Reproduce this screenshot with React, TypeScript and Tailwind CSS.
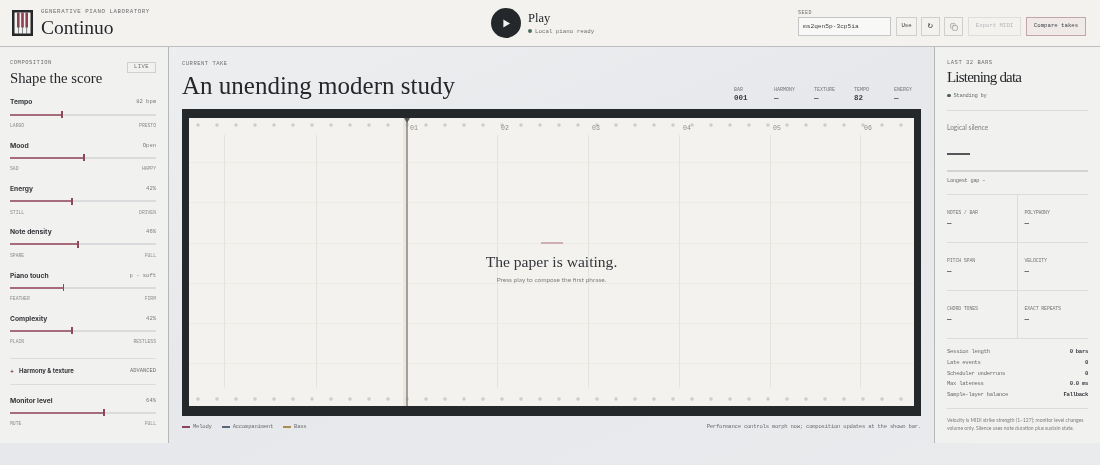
import { Copy } from 'lucide-react';
import React from 'react';

const serif = "font-['Liberation_Serif',serif]";
const mono = "font-['Liberation_Mono',monospace]";
const sans = "font-['Inter',sans-serif]";
const soft = "font-['Lato',sans-serif]";

const sliders = [
  { label: 'Tempo', value: '82 bpm', pct: 35, min: 'LARGO', max: 'PRESTO' },
  { label: 'Mood', value: 'Open', pct: 50, min: 'SAD', max: 'HAPPY' },
  { label: 'Energy', value: '42%', pct: 42, min: 'STILL', max: 'DRIVEN' },
  { label: 'Note density', value: '46%', pct: 46, min: 'SPARE', max: 'FULL' },
  { label: 'Piano touch', value: 'p · soft', pct: 36, min: 'FEATHER', max: 'FIRM' },
  { label: 'Complexity', value: '42%', pct: 42, min: 'PLAIN', max: 'RESTLESS' },
];

const metrics = [
  ['NOTES / BAR', 'POLYPHONY'],
  ['PITCH SPAN', 'VELOCITY'],
  ['CHORD TONES', 'EXACT REPEATS'],
];

const session = [
  ['Session length', '0 bars'],
  ['Late events', '0'],
  ['Scheduler underruns', '0'],
  ['Max lateness', '0.0 ms'],
  ['Sample-layer balance', 'Fallback'],
];

const stats = [
  ['BAR', '001'],
  ['HARMONY', '—'],
  ['TEXTURE', '—'],
  ['TEMPO', '82'],
  ['ENERGY', '—'],
];

const legend = [
  ['Melody', 'bg-[#8f4358]'],
  ['Accompaniment', 'bg-[#56657a]'],
  ['Bass', 'bg-[#a98d52]'],
];

function Slider({ label, value, pct, min, max }: (typeof sliders)[number]) {
  return (
    <div className="h-[43.3px]">
      <div className="flex h-[13px] items-center justify-between pt-[2px]">
        <span className={`${sans} text-[6.7px] font-bold text-[#33363a]`}>{label}</span>
        <span className={`${mono} text-[5.5px] text-[#77797b]`}>{value}</span>
      </div>
      <div className="relative mt-[5px] h-[3px]">
        <div className="absolute inset-x-0 top-[0.5px] h-[2px] bg-[#dadbdc]" />
        <div className="absolute left-0 top-[0.5px] h-[2px] bg-[#a66c7b]" style={{ width: `${pct}%` }} />
        <div className="absolute top-[-2px] h-[7px] w-[1.5px] bg-[#8a4a5c]" style={{ left: `${pct}%` }} />
      </div>
      <div className={`${mono} mt-[7px] flex justify-between text-[4.7px] leading-[6px] text-[#8a8c8e]`}>
        <span>{min}</span>
        <span>{max}</span>
      </div>
    </div>
  );
}

function ScoreRoll() {
  const dots = Array.from({ length: 38 }, (_, k) => 9 + 19 * k);
  const columns = [35.5, 127.5, 308.5, 399.5, 490.5, 581.5, 671.5];
  const rows = [44.5, 84.5, 125.5, 165.5, 205.5, 245.5];
  const bars = [
    ['01', 221],
    ['02', 312],
    ['03', 403],
    ['04', 494],
    ['05', 584],
    ['06', 675],
  ] as const;
  return (
    <svg viewBox="0 0 725 288" className="absolute inset-0 h-full w-full">
      <rect x="214" y="0" width="4" height="288" fill="#ece7da" />
      {rows.map((y) => (
        <line key={y} x1="0" x2="725" y1={y} y2={y} stroke="#ecebe6" strokeWidth="1" />
      ))}
      {columns.map((x) => (
        <line key={x} x1={x} x2={x} y1="17" y2="270" stroke="#e4e3de" strokeWidth="1" />
      ))}
      {dots.map((x) => (
        <g key={x} fill="#cdccc7">
          <circle cx={x} cy="7" r="1.7" />
          <circle cx={x} cy="281" r="1.7" />
        </g>
      ))}
      {bars.map(([label, x]) => (
        <text key={label} x={x} y="11.5" fontSize="6.5" fontFamily="Liberation Mono, monospace" fill="#8c8d88">
          {label}
        </text>
      ))}
      <line x1="218" x2="218" y1="0" y2="288" stroke="#858583" strokeWidth="1.5" />
      <path d="M215 0 L221 0 L218 5 Z" fill="#5c5d5e" />
    </svg>
  );
}

export default function App() {
  return (
    <div className="h-[465px] w-[1100px] overflow-hidden bg-gradient-to-br from-[#eff0f1] via-[#e7e8eb] to-[#eaebed] will-change-transform">
      {/* Header */}
      <header className="flex h-[47px] items-center border-b border-[#bdbec0] bg-[#f3f2ef] pl-[12px] pr-[14px]">
        <div className="flex w-[479px] items-center gap-[8px]">
          <svg viewBox="0 0 21 26" className="h-[26px] w-[21px]">
            <rect width="21" height="26" fill="#25282b" />
            <rect x="2.5" y="2.5" width="16" height="21" fill="#f3f2ef" />
            <rect x="5" y="2.5" width="2.6" height="15" fill="#8a3f52" />
            <rect x="9.2" y="2.5" width="2.6" height="15" fill="#8a3f52" />
            <rect x="13.4" y="2.5" width="2.6" height="15" fill="#8a3f52" />
            <rect x="6" y="17" width="0.7" height="7" fill="#55585b" />
            <rect x="10.2" y="17" width="0.7" height="7" fill="#55585b" />
            <rect x="14.4" y="17" width="0.7" height="7" fill="#55585b" />
          </svg>
          <div>
            <div className={`${mono} text-[5.8px] leading-[8px] tracking-[0.55px] text-[#6c6e70]`}>
              GENERATIVE PIANO LABORATORY
            </div>
            <div className={`${serif} mt-[1px] text-[19.5px] leading-[22px] text-[#25282b]`}>Continuo</div>
          </div>
        </div>
        <div className="flex w-[307px] items-center gap-[7px]">
          <button className="flex h-[30px] w-[30px] items-center justify-center rounded-full bg-[#25282b]">
            <svg viewBox="0 0 10 10" className="ml-[1px] h-[9px] w-[9px]">
              <path d="M1.5 0.5 L9 5 L1.5 9.5 Z" fill="#f5f4f1" />
            </svg>
          </button>
          <div>
            <div className={`${serif} text-[12.5px] leading-[15px] text-[#25282b]`}>Play</div>
            <div className={`${mono} mt-[1px] flex items-center gap-[3px] text-[5.8px] leading-[9px] text-[#6c6e70]`}>
              <span className="h-[4px] w-[4px] rounded-full bg-[#4f6f5f]" />
              Local piano ready
            </div>
          </div>
        </div>
        <div>
          <div className={`${mono} text-[5px] leading-[8px] tracking-[0.5px] text-[#6c6e70]`}>SEED</div>
          <div className={`${mono} mb-[1px] flex h-[19px] items-stretch gap-[4px] text-[5.7px] text-[#3a3d40]`}>
            <div className="mr-[1px] flex w-[93px] items-center border border-[#c4c5c6] bg-[#f8f8f6] px-[4px] text-[6.2px]">
              ms2qen5p-3cp5ia
            </div>
            <button className="w-[21px] border border-[#cfcfcf]">Use</button>
            <button className="flex w-[19px] items-center justify-center border border-[#cfcfcf] text-[9px]">↻</button>
            <button className="mr-[1px] flex w-[19px] items-center justify-center border border-[#cfcfcf] text-[#6c6e70]">
              <Copy size={8} strokeWidth={1.5} />
            </button>
            <button className="mr-[1px] w-[53px] border border-[#dedede] text-[#b5b6b7]">Export MIDI</button>
            <button className="w-[60px] border border-[#c4a4ab] bg-[#efe9e8]">Compare takes</button>
          </div>
        </div>
      </header>

      <div className="grid h-[396px] grid-cols-[169px_1fr_166px]">
        {/* Composition controls */}
        <aside className="border-r border-[#b5b6b8] bg-[#f1f1ef] pl-[10px] pr-[12px] pt-[12px]">
          <div className="flex items-start justify-between">
            <div>
              <div className={`${mono} text-[5.5px] leading-[8px] tracking-[0.5px] text-[#6c6e70]`}>COMPOSITION</div>
              <div className={`${serif} mt-[1px] text-[14.7px] leading-[20px] text-[#25282b]`}>Shape the score</div>
            </div>
            <div className={`${mono} mt-[3px] flex h-[11px] w-[29px] items-center justify-center border border-[#d0d0d0] text-[5.5px] tracking-[0.5px] text-[#6c6e70]`}>
              LIVE
            </div>
          </div>
          <div className="mt-[7px]">
            {sliders.map((s) => (
              <Slider key={s.label} {...s} />
            ))}
          </div>
          <div className="mt-[3px] flex h-[27px] items-center justify-between border-y border-[#dcdcdc]">
            <div className={`${sans} flex items-center gap-[5px] text-[6px] font-bold leading-[8px] text-[#33363a]`}>
              <span className="text-[#8a3f52]">+</span>
              Harmony &amp; texture
            </div>
            <span className={`${mono} flex h-[8px] items-center text-[5.4px] text-[#6c6e70]`}>ADVANCED</span>
          </div>
          <div className="mt-[8.5px]">
            <Slider label="Monitor level" value="64%" pct={64} min="MUTE" max="FULL" />
          </div>
        </aside>

        {/* Current take */}
        <main className="flex min-w-0 flex-col px-[13px] pt-[13px]">
          <div className="flex h-[49px] items-start justify-between">
            <div>
              <div className={`${mono} text-[5.5px] leading-[8px] tracking-[0.5px] text-[#6c6e70]`}>CURRENT TAKE</div>
              <h1 className={`${serif} mt-[2px] text-[25px] leading-[32px] text-[#25282b]`}>An unending modern study</h1>
            </div>
            <div className="mt-[27px] flex w-[187px]">
              {stats.map(([label, value]) => (
                <div key={label} className="w-[40px] last:w-[27px]">
                  <div className={`${mono} text-[5px] leading-[6px] text-[#77797b]`}>{label}</div>
                  <div className={`${mono} text-[7.5px] font-bold leading-[11px] text-[#3a3d40]`}>{value}</div>
                </div>
              ))}
            </div>
          </div>
          <div className="h-[307px] border-x-[7px] border-b-[10px] border-t-[9px] border-[#25282b]">
            <div className="relative h-full bg-[#f3f2ee]">
              <ScoreRoll />
              <div className="absolute inset-x-0 top-[124px] flex flex-col items-center">
                <div className="h-[2px] w-[22px] bg-[#cdaeb5]" />
                <div className={`${serif} mt-[8px] text-[15.6px] leading-[20px] text-[#33363a]`}>The paper is waiting.</div>
                <div className={`${soft} mt-[3px] text-[6.5px] leading-[9px] text-[#7e8082]`}>Press play to compose the first phrase.</div>
              </div>
            </div>
          </div>
          <div className={`${mono} mt-[7px] flex items-center justify-between text-[5.6px] tracking-[-0.25px] text-[#6c6e70]`}>
            <div className="flex gap-[10px]">
              {legend.map(([name, color]) => (
                <span key={name} className="flex items-center gap-[3px]">
                  <span className={`h-[2px] w-[8px] ${color}`} />
                  {name}
                </span>
              ))}
            </div>
            <span>Performance controls morph now; composition updates at the shown bar.</span>
          </div>
        </main>

        {/* Listening data */}
        <aside className="border-l border-[#b5b6b8] bg-[#f1f1ef] pl-[12px] pr-[12px] pt-[12px]">
          <div className={`${mono} text-[5.5px] leading-[8px] tracking-[0.5px] text-[#6c6e70]`}>LAST 32 BARS</div>
          <div className={`${serif} text-[15px] leading-[20px] tracking-[-0.8px] text-[#25282b]`}>Listening data</div>
          <div className={`${mono} mt-[4px] flex items-center gap-[3px] text-[5.5px] leading-[9px] tracking-[-0.3px] text-[#6c6e70]`}>
            <span className="h-[3.5px] w-[3.5px] rounded-full bg-[#4f5f58]" />
            Standing by
          </div>
          <div className="mt-[10px] border-t border-[#dcdcdc] pt-[12px]">
            <div className={`${soft} text-[6.6px] leading-[9px] text-[#7e8082]`}>Logical silence</div>
            <div className="mt-[21px] h-[2px] w-[23px] bg-[#55585b]" />
            <div className="mt-[15px] h-[2px] bg-[#d2d3d5]" />
            <div className={`${mono} mt-[5px] text-[5.4px] leading-[8px] tracking-[-0.3px] text-[#6c6e70]`}>Longest gap –</div>
          </div>
          <div className="mt-[9px] grid grid-cols-2 border-t border-[#dcdcdc]">
            {metrics.flat().map((name, i) => (
              <div key={name} className={`h-[48px] border-b border-[#dcdcdc] pt-[15px] ${i % 2 === 0 ? 'border-r' : 'pl-[7px]'}`}>
                <div className={`${mono} text-[5px] leading-[7px] tracking-[-0.2px] text-[#77797b]`}>{name}</div>
                <div className={`${mono} mt-[1px] text-[7.5px] font-bold leading-[10px] text-[#44474a]`}>—</div>
              </div>
            ))}
          </div>
          <div className={`${mono} mt-[8px] border-b border-[#dcdcdc] pb-[7px] text-[5.6px] leading-[10.8px] tracking-[-0.3px]`}>
            {session.map(([name, value]) => (
              <div key={name} className="flex justify-between">
                <span className="text-[#6c6e70]">{name}</span>
                <span className="font-bold text-[#3a3d40]">{value}</span>
              </div>
            ))}
          </div>
          <p className={`${soft} mt-[8px] text-[5px] leading-[7.6px] text-[#7e8082]`}>
            Velocity is MIDI strike strength (1–127); monitor level changes volume only. Silence uses note duration plus sustain state.
          </p>
        </aside>
      </div>
    </div>
  );
}
